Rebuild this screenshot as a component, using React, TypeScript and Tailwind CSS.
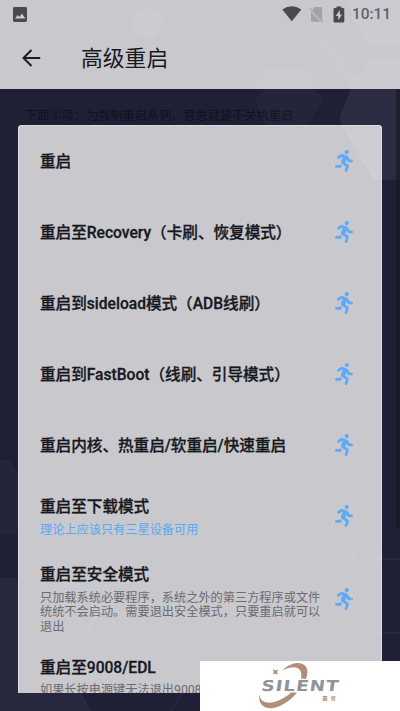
import type { ReactNode } from "react";
import { FaRunning } from "react-icons/fa";

type Item = { title: string; note?: ReactNode; noteClass?: string; rowClass: string };

const ITEMS: Item[] = [
  { title: "重启", rowClass: "h-[71.2px] items-center" },
  { title: "重启至Recovery（卡刷、恢复模式）", rowClass: "h-[71.2px] items-center" },
  { title: "重启到sideload模式（ADB线刷）", rowClass: "h-[71.2px] items-center" },
  { title: "重启到FastBoot（线刷、引导模式）", rowClass: "h-[71.2px] items-center" },
  { title: "重启内核、热重启/软重启/快速重启", rowClass: "h-[71.2px] items-center" },
  {
    title: "重启至下载模式",
    note: "理论上应该只有三星设备可用",
    noteClass: "mt-[5px] text-[#5aa7f3]",
    rowClass: "h-[71px] items-center",
  },
  {
    title: "重启至安全模式",
    note: (
      <>
        只加载系统必要程序，系统之外的第三方程序或文件
        <br />
        统统不会启动。需要退出安全模式，只要重启就可以
        <br />
        退出
      </>
    ),
    noteClass: "mt-[5px] text-[#6b6b70]",
    rowClass: "h-[93px] items-center pt-[1.5px]",
  },
  {
    title: "重启至9008/EDL",
    note: "如果长按电源键无法退出9008",
    noteClass: "mt-[4px] text-[#6b6b70]",
    rowClass: "h-[122px] pt-[12px]",
  },
];

function Backdrop() {
  return (
    <svg className="pointer-events-none absolute inset-0" width="400" height="711" viewBox="0 0 400 711">
      <g fill="#fff" fillOpacity="0.055">
        <path d="M351 89 L341 113 Q338 119 342 125 L372 177 Q375 180 380 180 H400 V89Z" />
        <path d="M268 89 H313 L324 98 L308 125 H265 L254 98Z" fillOpacity="0.025" />
        <path d="M0 460 H10 L18 474 V533 H0Z" fillOpacity="0.025" />
        <path d="M0 578 H18 V693 H80 L90 711 H0Z" fillOpacity="0.04" />
      </g>
      <rect x="396" y="89" width="4" height="439" fill="#17181f" fillOpacity="0.65" />
    </svg>
  );
}

function Facets() {
  return (
    <svg className="pointer-events-none absolute inset-0" width="400" height="711" viewBox="0 0 400 711">
      <g fill="#e3dfe8" fillOpacity="0.16">
        <path d="M139 9 H156 L164 23 L156 38 H139 L131 23Z" />
        <path d="M267 67 H308 L322 89 H254Z" fillOpacity="0.1" />
        <path d="M400 0 H348 L355 21 L366 41 Q368 45 374 45 H400Z" />
        <path d="M400 58 H374 Q370 58 367 63 L352 89 H400Z" />
        <path d="M306 25 L316 25 L360 79 L351 89Z" fillOpacity="0.1" />
        <path d="M342 127 H381 V180 H374Z" />
      </g>
      <g fill="none" stroke="#e7e4e9" strokeOpacity="0.25" strokeWidth="0.8">
        <path d="M72 0 L82 17 M0 36 H99 Q104 36 106 31 L122 0 M183 0 L197 27 Q199 32 205 33 H256 Q263 32 266 26 L280 0" />
        <path d="M360 544 H374 L381 558 L374 571 H360 L352 558Z M381 559 H372 Q368 560 366 564 L352 591 L351 600 L366 629 Q369 633 374 633 H381" />
        <path d="M80 642 L105 600 M181 608 L200 640 M88 625 L116 675" />
      </g>
      <g fill="none" stroke="#aaa9bd" strokeOpacity="0.14" strokeWidth="0.8">
        <path d="M382 559 H400 M382 633 H400 M80 693 L91 711 M182 693 L171 711" />
      </g>
    </svg>
  );
}

function StatusBar() {
  return (
    <div className="flex h-7 items-center pl-[13px] pr-[9px] text-[#4a4a4d]">
      <svg width="14" height="15" viewBox="0 0 14 15">
        <rect width="14" height="15" rx="1.4" fill="currentColor" />
        <path d="M2 11.5 L4.6 8 L6.2 10 L9 6.5 L12.3 11.5Z" fill="#cbcacf" />
      </svg>
      <svg className="ml-auto" width="20" height="16" viewBox="0 0 20 16">
        <path d="M0.3 3.6 Q9.8 -3.3 19.3 3.6 L9.8 15.3Z" fill="currentColor" />
      </svg>
      <svg className="ml-[7px]" width="15" height="17" viewBox="0 0 15 17">
        <path d="M5.5 1 H11.8 Q13.2 1 13.2 2.4 V14.5 L3.5 4Z M2 6 L11.5 15.8 H3.2 Q2 15.8 2 14.5Z" fill="#a3a2a7" />
        <path d="M0.8 2.2 L13.8 16" stroke="#a3a2a7" strokeWidth="1.1" />
      </svg>
      <svg className="ml-[9px]" width="12" height="17" viewBox="0 0 12 17">
        <path d="M3.5 0.5 H8.3 V2 H10 Q11.3 2 11.3 3.3 V15.3 Q11.3 16.6 10 16.6 H1.7 Q0.5 16.6 0.5 15.3 V3.3 Q0.5 2 1.7 2 H3.5Z" fill="currentColor" />
        <path d="M6.8 4 L2.8 10 H5.2 V14.3 L9 8.4 H6.8Z" fill="#cbcacf" />
      </svg>
      <span className="ml-[7px] w-[39px] whitespace-nowrap pt-[2px] text-[15.4px] font-medium leading-none">10:11</span>
    </div>
  );
}

function SilentLogo() {
  return (
    <svg width="200" height="50" viewBox="0 0 200 50">
      <g fill="#b18e7c">
        <path d="M82 9.5 Q90 1.8 98 2 C107 2.5 109.5 9 106 18 L101 17.5 C103 8 97 2.5 82 9.5Z" />
        <path d="M59.3 33.5 C57 52 80 52 97 31.5 L91 31.5 C80 42 61 47 59.3 33.5Z" />
        <path d="M72.5 8 L75.6 9.6 L78.6 8.4 L77 11 L78.3 13.5 L75.3 12.4 L72.6 13.6 L74 11Z" />
      </g>
      <g transform="skewX(-8)">
        <text
          x="65"
          y="29.8"
          textLength="78"
          lengthAdjust="spacingAndGlyphs"
          className="font-['DejaVu_Sans',sans-serif] text-[15px] font-bold"
          letterSpacing="0.8"
          fill="#929399"
        >
          SILENT
        </text>
      </g>
      <text x="122.5" y="38.6" className="text-[5px] font-bold" letterSpacing="3" fill="#b18e7c">
        赛邻
      </text>
    </svg>
  );
}

export default function App() {
  return (
    <div className="relative flex h-[711px] w-[400px] flex-col overflow-hidden bg-[#1f2036] font-[Roboto,'Noto_Sans_CJK_SC',sans-serif] text-[#17181d]">
      <Backdrop />
      <header className="h-[89px] shrink-0 bg-[#c8c8cd]">
        <StatusBar />
        <div className="flex h-[61px] items-center pl-[22px]">
          <svg className="mb-[2px]" width="19" height="18" viewBox="0 0 19 18" fill="none" stroke="#1c1c22" strokeWidth="2">
            <path d="M9.5 1 L1.5 9 L9.5 17 M1.5 9 H18.2" />
          </svg>
          <h1 className="ml-[40px] text-[21.8px] leading-none">高级重启</h1>
        </div>
      </header>
      <p className="h-9 shrink-0 whitespace-nowrap pl-[25px] pt-[17px] font-['Noto_Sans_CJK_SC',sans-serif] text-[12.2px] leading-[18px] text-[#10111c]">
        下面⑧项：为强制重启系列、意思就是不关机重启
      </p>
      <main className="mx-[18px] h-[568px] shrink-0 overflow-hidden rounded-t-[4px] bg-[#c8c8cd] shadow-[inset_1px_1px_0_#dcdbdf,inset_-1px_0_0_#dcdbdf]">
        {ITEMS.map((item) => (
          <section key={item.title} className={`flex justify-between pl-[22px] pr-[29px] ${item.rowClass}`}>
            <div className="whitespace-nowrap">
              <h2
                className={`text-[15.6px] font-medium leading-[22px] [-webkit-text-stroke:0.3px_#17181d] ${item.note ? "" : "pt-[2px]"}`}
              >
                {item.title}
              </h2>
              {item.note && (
                <p className={`text-[12.2px] leading-[14.6px] ${item.noteClass}`}>{item.note}</p>
              )}
            </div>
            <FaRunning className="h-[22px] w-[18px] shrink-0 self-center text-[#5eaaf5]" />
          </section>
        ))}
      </main>
      <Facets />
      <div className="absolute bottom-0 right-0 h-[50px] w-[200px] bg-white">
        <SilentLogo />
      </div>
    </div>
  );
}
